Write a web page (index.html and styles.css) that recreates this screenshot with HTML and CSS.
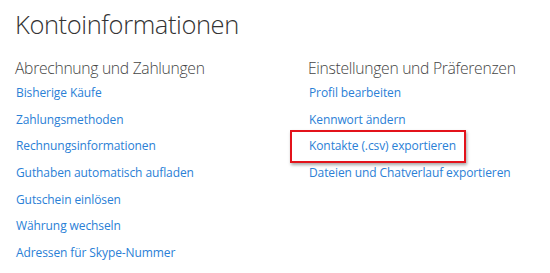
FILE: index.html
```html
<!DOCTYPE html>
<html lang="de">
<head>
    <meta charset="UTF-8">
    <title>Kontoinformationen</title>
    <link rel="stylesheet" href="styles.css">
</head>
<body>
    <div class="page">
        <h1>Kontoinformationen</h1>
        <div class="columns">
            <div class="column">
                <h2>Abrechnung und Zahlungen</h2>
                <ul class="links">
                    <li><a href="#">Bisherige Käufe</a></li>
                    <li><a href="#">Zahlungsmethoden</a></li>
                    <li><a href="#">Rechnungsinformationen</a></li>
                    <li><a href="#">Guthaben automatisch aufladen</a></li>
                    <li><a href="#">Gutschein einlösen</a></li>
                    <li><a href="#">Währung wechseln</a></li>
                    <li><a href="#">Adressen für Skype-Nummer</a></li>
                </ul>
            </div>
            <div class="column right">
                <h2>Einstellungen und Präferenzen</h2>
                <ul class="links">
                    <li><a href="#">Profil bearbeiten</a></li>
                    <li><a href="#">Kennwort ändern</a></li>
                    <li class="marked"><a href="#">Kontakte (.csv) exportieren</a></li>
                    <li><a href="#">Dateien und Chatverlauf exportieren</a></li>
                </ul>
            </div>
        </div>
    </div>
</body>
</html>
```

FILE: styles.css
```css
body {
    margin: 0;
    background-color: #fff;
    font-family: "Open Sans", "Noto Sans", Arial, sans-serif;
}
.page {
    padding: 6px 0 0 15px;
}
h1 {
    margin: 0;
    font-size: 25.5px;
    font-weight: 300;
    color: #333;
    line-height: 36px;
    letter-spacing: -0.4px;
}
.columns {
    display: flex;
    margin-top: 14.5px;
}
.column {
    width: 293px;
}
.right {
    width: auto;
}
h2 {
    margin: 0;
    font-size: 15.7px;
    font-weight: 300;
    color: #444;
    line-height: 22px;
    letter-spacing: -0.3px;
}
.links {
    list-style: none;
    margin: 1.5px 0 0 1px;
    padding: 0;
}
.links li {
    height: 26.67px;
    line-height: 26.67px;
    font-size: 12px;
}
.links a {
    color: #2a80d6;
    text-decoration: none;
    letter-spacing: -0.1px;
}
.marked {
    position: relative;
}
.marked::after {
    content: "";
    position: absolute;
    left: -19px;
    top: -3px;
    width: 172px;
    height: 29px;
    border: 2px solid #e3131b;
    box-shadow: 1px 2px 3px rgba(0,0,0,0.35);
}
```
